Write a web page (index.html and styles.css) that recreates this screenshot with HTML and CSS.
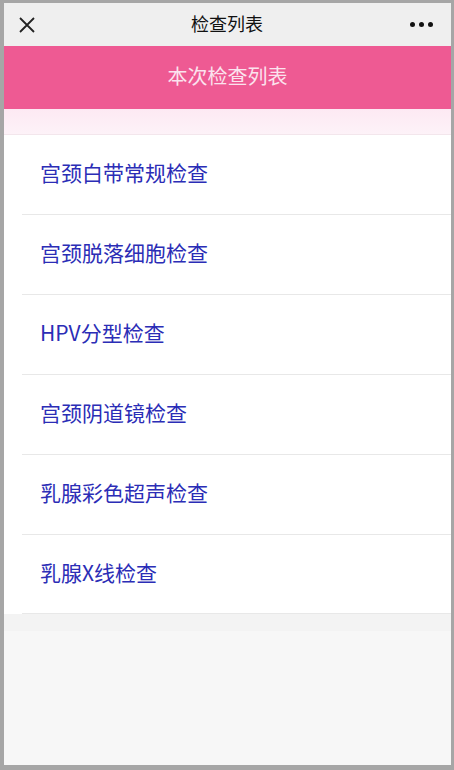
FILE: index.html
```html
<!DOCTYPE html>
<html lang="zh-CN">
<head>
    <meta charset="UTF-8">
    <meta name="viewport" content="width=device-width, initial-scale=1.0">
    <title>检查列表</title>
    <link rel="stylesheet" href="styles.css">
</head>
<body>
    <div class="frame">
        <header class="topbar">
            <svg class="close" width="18" height="18" viewBox="0 0 18 18">
                <path d="M2 2 L16 16 M16 2 L2 16" stroke="#222" stroke-width="1.8" fill="none"/>
            </svg>
            <h1>检查列表</h1>
            <span class="more"><i></i><i></i><i></i></span>
        </header>
        <div class="banner">本次检查列表</div>
        <div class="band"></div>
        <ul class="lista">
            <li>宫颈白带常规检查</li>
            <li>宫颈脱落细胞检查</li>
            <li>HPV分型检查</li>
            <li>宫颈阴道镜检查</li>
            <li>乳腺彩色超声检查</li>
            <li>乳腺X线检查</li>
        </ul>
        <div class="under"></div>
    </div>
</body>
</html>
```

FILE: styles.css
```css
body {
    margin: 0;
    font-family: "Noto Sans CJK SC", "Noto Sans", sans-serif;
}
.frame {
    height: 770px;
    box-sizing: border-box;
    border-style: solid;
    border-color: #a6a6a6;
    border-width: 3px 3px 5px 4px;
    background-color: #f7f7f7;
    display: flex;
    flex-direction: column;
}
.topbar {
    height: 43px;
    background-color: #efefef;
    display: flex;
    align-items: center;
    justify-content: space-between;
    padding: 0 18px 0 14px;
    flex-shrink: 0;
}
.topbar h1 {
    margin: 0;
    font-size: 18px;
    font-weight: normal;
    color: #111;
    position: relative;
    left: 4px;
    top: -2px;
}
.more {
    display: flex;
    gap: 4px;
}
.more i {
    width: 5px;
    height: 5px;
    border-radius: 50%;
    background-color: #111;
}
.banner {
    height: 63px;
    padding-bottom: 4px;
    box-sizing: border-box;
    background-color: #ee5a93;
    color: #fbe3ee;
    font-size: 20px;
    display: flex;
    align-items: center;
    justify-content: center;
    flex-shrink: 0;
}
.band {
    height: 25px;
    background: linear-gradient(#fde9f3, #fdf2f8);
    border-bottom: 1px solid #f3e6ec;
    flex-shrink: 0;
}
.lista {
    list-style: none;
    margin: 0;
    padding: 0;
    background-color: #fff;
}
.lista li {
    height: 80px;
    box-sizing: border-box;
    margin-left: 18px;
    padding: 0 0 5px 18px;
    border-bottom: 1px solid #e8e8e8;
    display: flex;
    align-items: center;
    font-size: 21px;
    color: #2b2db6;
}
.lista li:last-child {
    height: 79px;
}
.under {
    height: 17px;
    background-color: #f3f3f3;
}
```
